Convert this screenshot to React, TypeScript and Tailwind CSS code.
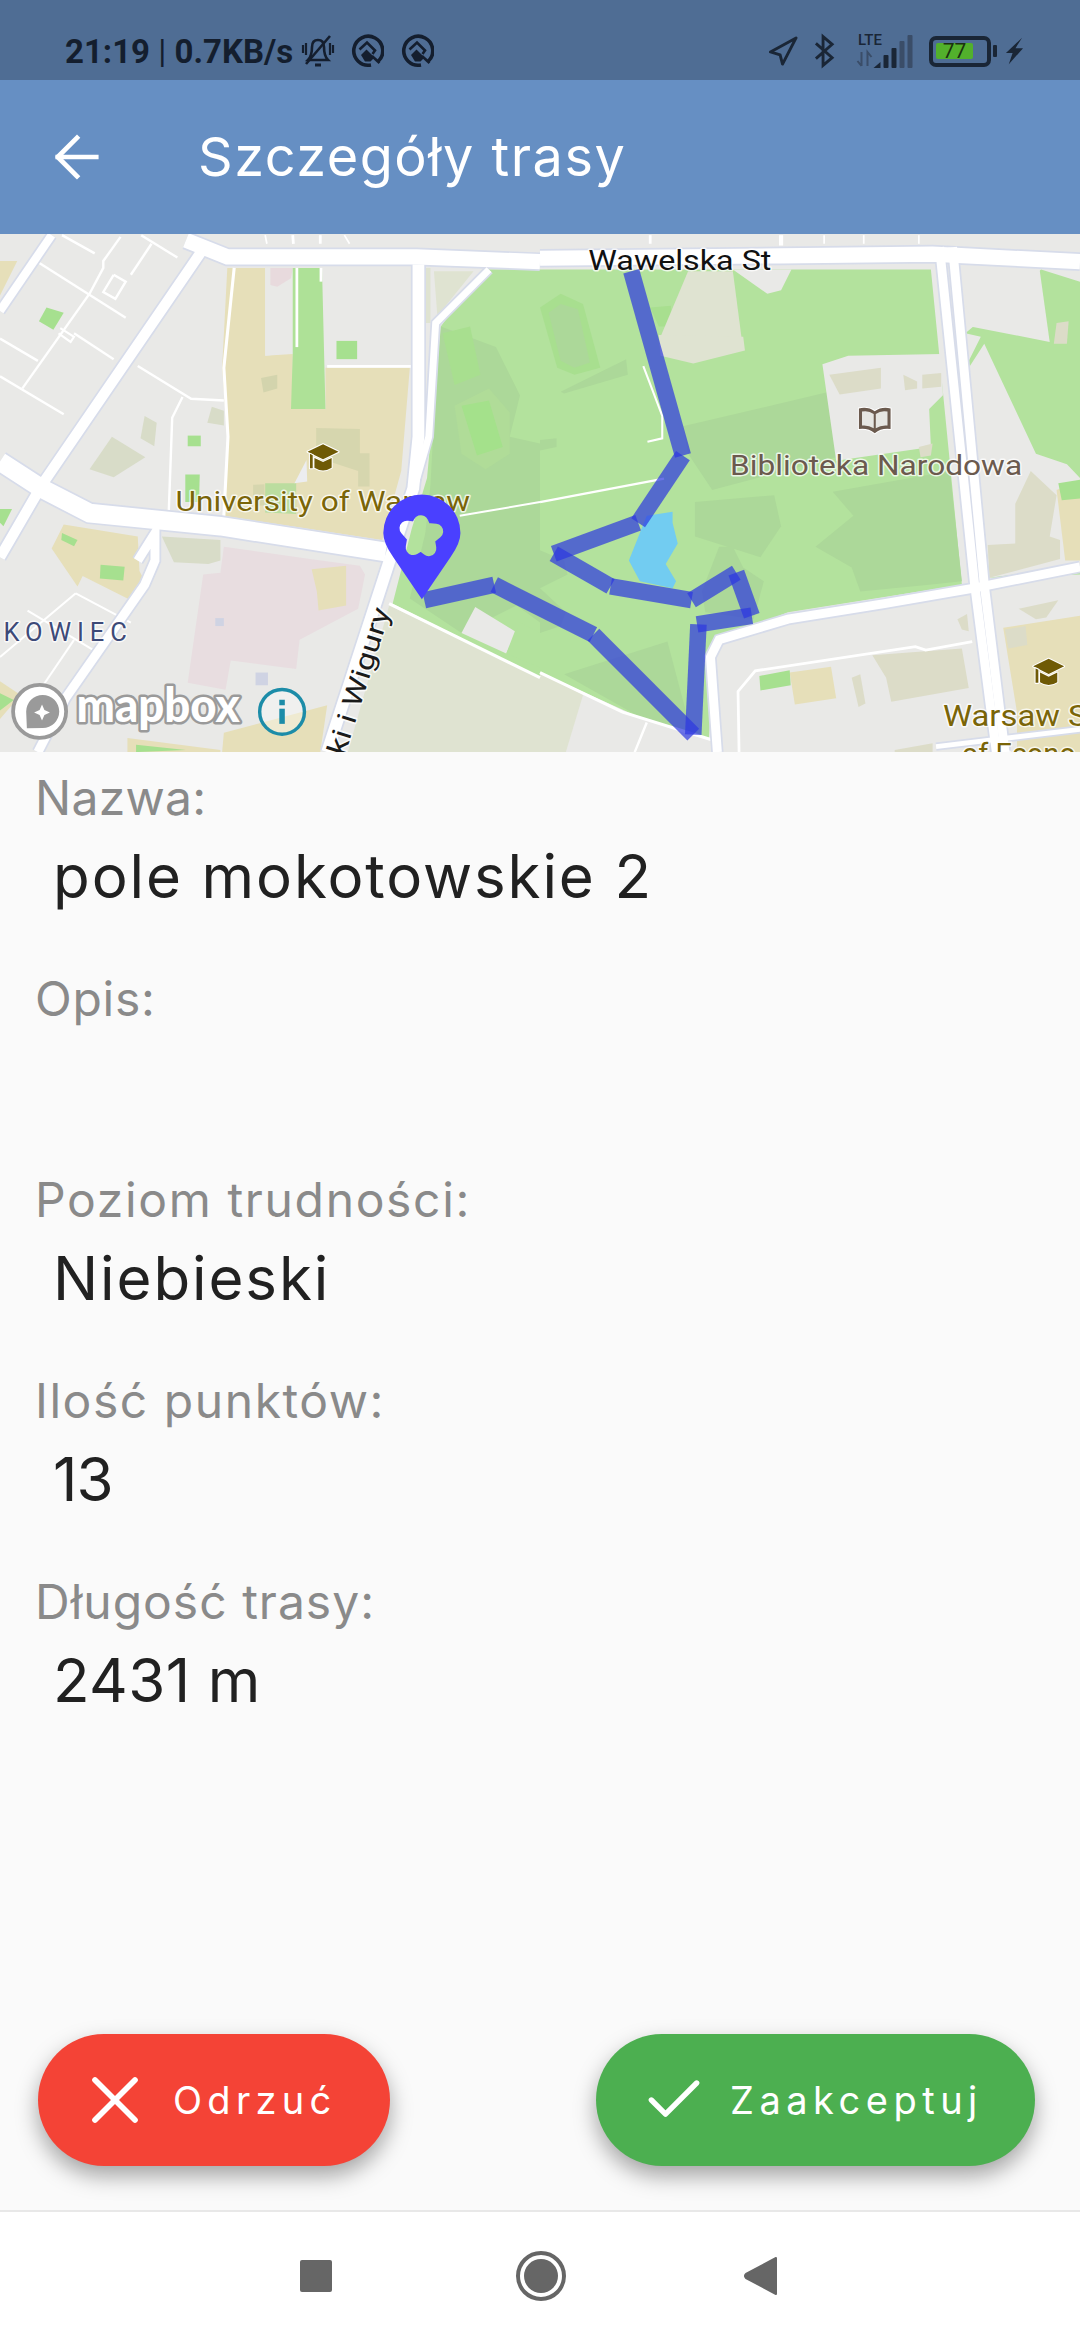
import { ArrowLeft, X, Check } from "lucide-react";

type P = [string, string];
const R = 1568;
const PARK = "#b3e29d";
const WOOD = "#acd899";
// polygons [points, fill], authored in 2.904x map units
const leftPolys: P[] = [
  ["660,110 770,110 770,365 850,360 850,520 945,520 945,400 1190,400 1165,700 1110,900 650,830 660,600 645,400", "#e6dfb9"],
  ["770,110 860,110 860,355 770,365", "#e9e9e7"],
  ["785,110 850,110 845,140 805,165 785,160", "#e8dadd"],
  ["850,110 935,110 945,520 845,520 850,360", "#aee197"],
  ["977,322 1037,322 1037,375 977,375", "#a6e08f"],
  ["758,430 805,420 805,460 765,472", "#d3d4ad"],
  ["918,575 1045,578 1045,648 1073,648 1073,745 1040,745 1040,700 918,660", "#d6d6ae"],
  ["770,735 860,735 860,825 770,820", "#bbdd9f"],
  ["735,740 768,738 768,800 735,800", "#d6d6ae"],
  ["855,735 890,668 892,730", "#ecedf0"],
  ["420,540 455,560 448,628 408,605", "#d8dcc8"],
  ["325,600 422,660 330,718 260,695", "#d8dcc8"],
  ["615,513 650,525 650,568 602,560", "#d8dcc8"],
  ["545,597 583,597 583,628 545,628", "#a6e08f"],
  ["538,710 580,710 578,790 538,790", "#a6e08f"],
  ["113,265 135,225 185,240 155,290", "#a6e08f"],
  ["150,925 185,855 400,890 405,990 420,1020 380,1075 240,1005 225,1035", "#e6dfb9"],
  ["180,880 225,900 215,918 178,900", "#a6e08f"],
  ["292,972 362,978 358,1018 290,1012", "#a6e08f"],
  ["0,810 35,810 10,860 0,850", "#a6e08f"],
  ["0,90 50,90 0,190", "#e6dfb9"],
  ["590,1000 640,995 650,920 900,955 1045,975 1060,1000 1040,1100 870,1190 860,1275 670,1250 655,1335 545,1315", "#e8dde0"],
  ["905,985 1005,975 1005,1090 925,1105 920,1050", "#e6dfb9"],
  ["625,1127 650,1127 650,1150 625,1150", "#cfd3e3"],
  ["742,1285 778,1285 778,1322 742,1322", "#cfd3e3"],
  ["470,890 640,900 640,960 605,970 505,965", "#d8dcc8"],
  ["1130,1090 1568,1300 1568,1516 1010,1516", "#dfe3d1"],
  ["650,1460 950,1380 930,1516 645,1516", "#e6dfb9"],
  ["370,1475 640,1510 640,1516 370,1516", "#e6dfb9"],
  ["395,1495 540,1510 395,1516", "#a6e08f"],
  ["0,1310 60,1350 0,1420", "#e6dfb9"],
  ["0,1345 40,1365 0,1395", "#a6e08f"],
  ["1400,115 1568,115 1568,1300 1140,1085 1195,870 1240,720 1280,280", PARK],
  ["1280,280 1440,340 1510,480 1480,600 1568,620 1568,1140 1500,1090 1340,1170 1190,1070 1235,880 1250,740 1260,550", WOOD],
  ["1285,300 1365,280 1395,420 1320,450", "#a8df8f"],
  ["1320,510 1420,460 1480,530 1480,650 1410,695 1340,650", "#b0dc98"],
  ["1340,510 1420,495 1460,630 1385,655", "#a4e18b"],
  ["1340,1170 1380,1095 1495,1165 1470,1230", "#e9e9e7"],
  ["1470,1230 1510,1140 1568,1170 1568,1270", PARK],
  ["1230,110 1250,110 1250,270 1230,270", "#dfe3d1"],
  ["1260,120 1375,120 1270,250", "#dfe3d1"],
];
const rightPolys: P[] = [
  ["0,1285 125,1350 75,1516 0,1516", "#dfe3d1"],
  ["0,115 1135,115 1225,1030 720,1110 510,1190 490,1480 300,1420 0,1285", PARK],
  ["415,570 840,470 860,660 500,755 430,650", WOOD],
  ["450,790 680,770 700,860 640,950 450,890", WOOD],
  ["850,760 1190,700 1225,1020 1130,1030 930,1050 905,980 800,920 910,830", WOOD],
  ["520,920 560,920 590,980 650,1020 620,1130 480,1110 470,1050", WOOD],
  ["0,1040 75,1110 60,1150 0,1170", WOOD],
  ["70,1290 370,1195 440,1460 300,1420", WOOD],
  ["0,225 60,185 125,215 175,400 100,420 50,400", "#a8df8f"],
  ["25,240 60,215 110,230 145,385 100,400 60,380", WOOD],
  ["60,470 250,375 255,420 70,475", WOOD],
  ["0,610 48,605 48,630 0,640", WOOD],
  ["320,225 380,220 385,280 345,280", "#a8df8f"],
  ["0,930 70,960 80,1000 0,1040", WOOD],
  ["430,120 560,120 590,350 350,310", "#dfe3d1"],
  ["345,305 590,310 595,350 445,388 350,365", "#dfe3d1"],
  ["560,115 730,115 700,175 660,185", "#e9e9e7"],
  ["820,390 895,365 1165,360 1170,480 1130,520 1135,630 860,670", "#e9e9e7"],
  ["840,420 990,400 990,460 870,478", "#dcdcc8"],
  ["1055,420 1095,440 1095,460 1060,465", "#dcdcc8"],
  ["1110,420 1165,415 1165,455 1110,460", "#dcdcc8"],
  ["1100,630 1140,620 1135,655 1105,660", "#dcdcc8"],
  ["1455,115 1568,150 1568,1000 1300,1010 1240,390 1280,310 1235,300", PARK],
  ["1250,280 1480,325 1450,110 1220,110", "#e9e9e7"],
  ["1245,400 1290,330 1440,650 1530,680 1568,720 1568,975 1305,1010", "#e9e9e7"],
  ["1425,700 1500,770 1480,890 1510,900 1510,955 1305,1010 1300,915 1380,910 1380,795", "#dcdcc8"],
  ["1500,755 1568,725 1568,960 1525,960", "#e6dfb9"],
  ["1505,735 1568,725 1568,780 1515,785", "#a6e08f"],
  ["1500,270 1535,265 1530,330 1492,330", "#dcdcc8"],
  ["1345,1155 1568,1120 1568,1516 1385,1516 1385,1400", "#e6dfb9"],
  ["1350,1160 1410,1150 1415,1205 1360,1215", "#dcdcc8"],
  ["1390,1100 1505,1075 1470,1125 1440,1130", "#dcdcc8"],
  ["965,1235 1225,1215 1245,1330 1020,1370 1005,1300", "#dcdcc8"],
  ["905,1300 930,1290 945,1375 925,1385", "#dcdcc8"],
  ["725,1285 845,1268 860,1360 740,1378", "#e6dfb9"],
  ["637,1295 725,1278 728,1322 640,1337", "#a6e08f"],
  ["1212,1130 1240,1115 1245,1165 1225,1160", "#dcdcc8"],
  ["1030,1510 1140,1490 1140,1516 1030,1516", "#dcdcc8"],
];
type Road = [string, number];
const leftRoads: Road[] = [
  ["590,55 125,735 0,950", 30],
  ["150,15 0,235", 24],
  ["400,960 450,880 450,960 420,1030 190,1360 110,1516", 26],
  ["0,672 120,750 260,822 640,860 1120,935", 54],
  ["950,1516 1128,970 1200,750 1215,600 1215,100", 34],
  ["1420,115 1265,270 1245,600 1205,740", 20],
  ["540,30 660,78 1210,78 1568,92", 44],
];
const rightRoads: Road[] = [
  ["0,82 700,75 1140,70 1568,92", 44],
  ["1160,50 1262,1030 1325,1516", 26],
  ["1198,50 1290,1030 1350,1516", 26],
  ["1568,978 1260,1040 1000,1085 720,1130 520,1190 495,1240 515,1516", 26],
  ["1150,1500 1568,1450", 14],
];
const leftLanes: [string, number][] = [
  ["105,90 365,255", 7], ["180,15 275,68", 7], ["440,40 380,130", 7], ["410,15 515,80", 7],
  ["350,20 300,90 300,110 260,185 65,460", 7], ["330,130 365,150 335,200 300,180 330,130", 7],
  ["175,285 215,310 205,325 170,300", 6], ["215,300 330,375", 7], ["0,315 110,380", 7],
  ["0,425 185,535", 7], ["400,395 555,490 650,495", 7], ["530,485 500,545 490,820", 7],
  ["680,110 650,400 662,600 650,830", 9], ["862,110 862,340", 8], ["950,396 1195,396", 8],
  ["220,1055 380,1140", 6], ["80,1105 280,1225", 6], ["0,1240 220,1055", 6], ["215,1190 120,1330", 6],
  ["1130,1085 1568,1300", 9], ["1335,830 1568,790", 6], ["770,15 775,40", 5], ["850,15 852,40", 8], ["930,15 930,40", 8], ["1000,15 1015,40", 5],
  ["932,110 932,150", 8],
];
const rightLanes: [string, number][] = [
  ["0,790 360,722", 7], ["300,395 355,540 355,605 312,615", 6], ["0,1285 240,1400 498,1480", 9],
  ["310,1430 275,1516", 7], ["578,1516 575,1340 625,1280 1090,1210 1120,1220 1255,1195", 8],
  ["825,15 825,40", 5], ["940,15 940,40", 5], ["320,15 320,40", 8], ["700,15 700,45", 12], ["1100,15 1100,40", 5],
];
const route = [
  "1833,120 1983,655", "1983,655 1853,850", "1853,850 1608,940", "1608,940 1773,1035", "1773,1035 2008,1075",
  "2008,1075 2138,995", "2138,995 2183,1120", "2183,1120 2024,1145", "2028,1145 2013,1465", "2013,1465 1723,1175",
  "1723,1175 1435,1030", "1435,1030 1232,1075",
];
const halo = { paintOrder: "stroke" as const };

function Cap({ x, y }: { x: number; y: number }) {
  return (
    <g transform={`translate(${x},${y})`} fill="#6f5a05" stroke="#fff" strokeWidth="6" style={halo} strokeLinejoin="round">
      <polygon points="-45,-18 0,-40 45,-18 0,4" />
      <path d="M-25,0 L0,12 L25,0 L25,28 Q0,44 -25,28 Z" />
      <path d="M-38,-12 L-38,30 L-30,30 L-30,-8 Z" />
    </g>
  );
}

function MapView() {
  return (
    <svg viewBox="0 234 1080 518" className="block w-full h-[518px]" preserveAspectRatio="none">
      <defs>
        <mask id="starmask" maskUnits="userSpaceOnUse" x="1000" y="700" width="450" height="450">
          <rect x="1000" y="700" width="450" height="450" fill="#fff" />
          <polygon
            points="1222,850 1232,872 1265,875 1240,895 1245,925 1223,908 1200,922 1205,892 1182,866 1212,870"
            fill="#000"
            stroke="#000"
            strokeWidth="44"
            strokeLinejoin="round"
          />
        </mask>
      </defs>
      <rect x="0" y="234" width="1080" height="518" fill="#e9e9e7" />
      <g transform="translate(0,230) scale(0.34439)">
        {leftPolys.map(([p, f], i) => <polygon key={i} points={p} fill={f} />)}
        <g transform={`translate(${R},0)`}>
          {rightPolys.map(([p, f], i) => <polygon key={i} points={p} fill={f} />)}
          <polygon points="310,830 385,818 385,850 400,910 365,970 395,1020 385,1040 290,1020 258,960" fill="#72ccf1" />
        </g>
        {leftLanes.map(([p, w], i) => <polyline key={i} points={p} fill="none" stroke="#fff" strokeWidth={w} />)}
        <g transform={`translate(${R},0)`}>
          {rightLanes.map(([p, w], i) => <polyline key={i} points={p} fill="none" stroke="#fff" strokeWidth={w} />)}
        </g>
        {leftRoads.map(([p, w], i) => <polyline key={i} points={p} fill="none" stroke="#d7dcea" strokeWidth={w + 10} />)}
        <g transform={`translate(${R},0)`}>
          {rightRoads.map(([p, w], i) => <polyline key={i} points={p} fill="none" stroke="#d7dcea" strokeWidth={w + 10} />)}
        </g>
        {leftRoads.map(([p, w], i) => <polyline key={i} points={p} fill="none" stroke="#fff" strokeWidth={w} />)}
        <g transform={`translate(${R},0)`}>
          {rightRoads.map(([p, w], i) => <polyline key={i} points={p} fill="none" stroke="#fff" strokeWidth={w} />)}
        </g>
        <g fontFamily="Roboto, sans-serif" style={halo} stroke="#ffffff" strokeWidth="8" strokeOpacity="0.75" strokeLinejoin="round">
          <text x="510" y="815" fontSize="80" fill="#7a6508" textLength="855" lengthAdjust="spacingAndGlyphs">University of Warsaw</text>
          <text x="10" y="1193" fontSize="74" fill="#3d4a78" textLength="358">KOWIEC</text>
          <text transform="translate(1000,1530) rotate(-72.5)" fontSize="78" fill="#1a1a1a" textLength="445" lengthAdjust="spacingAndGlyphs">ki i Wigury</text>
          <text x="1708" y="115" fontSize="82" fill="#111" textLength="532" lengthAdjust="spacingAndGlyphs">Wawelska St</text>
          <text x="2120" y="712" fontSize="82" fill="#6b5a4e" textLength="848" lengthAdjust="spacingAndGlyphs">Biblioteka Narodowa</text>
          <text x="2738" y="1440" fontSize="84" fill="#7a6508" textLength="420" lengthAdjust="spacingAndGlyphs">Warsaw S</text>
          <text x="2793" y="1552" fontSize="84" fill="#7a6508">of Econo</text>
        </g>
        <Cap x={938} y={662} />
        <Cap x={3045} y={1285} />
        <g transform="translate(2540,552)" stroke="#fff" strokeWidth="6" style={halo} strokeLinejoin="round">
          <path d="M-46,-34 Q-20,-40 0,-26 Q20,-40 46,-34 L46,26 Q20,22 0,38 Q-20,22 -46,26 Z" fill="#6b5a4e" />
          <path d="M-37,-25 Q-18,-29 -3,-18 L-3,24 Q-18,14 -37,16 Z M37,-25 Q18,-29 3,-18 L3,24 Q18,14 37,16 Z" fill="#e6e6e2" stroke="none" />
        </g>
        {route.map((p, i) => (
          <polyline key={i} points={p} fill="none" stroke="#2c38e0" strokeOpacity="0.7" strokeWidth="48" />
        ))}
        <path
          d="M1225,1072 L1142,950 Q1113,910 1113,880 A112,112 0 0 1 1337,880 Q1337,910 1308,950 Z"
          fill="#4a40ff"
          mask="url(#starmask)"
        />
        <circle cx="115" cy="1398" r="77" fill="#fff" stroke="#9a9a9a" strokeWidth="11" />
        <path d="M78,1447 L76,1398 A48,48 0 1 1 124,1446 Z" fill="#9a9a9a" />
        <path d="M122,1378 L129,1394 L145,1401 L129,1408 L122,1424 L115,1408 L99,1401 L115,1394 Z" fill="#fff" />
        <text x="222" y="1428" fontFamily="Lato, sans-serif" fontWeight="900" fontSize="138" fill="#fff" stroke="#9a9a9a" strokeWidth="15" style={halo} textLength="474" lengthAdjust="spacingAndGlyphs" strokeLinejoin="round">mapbox</text>
        <circle cx="819" cy="1399" r="65" fill="#fff" fillOpacity="0.35" stroke="#1c8ca8" strokeWidth="10" />
        <rect x="811" y="1390" width="16" height="44" fill="#1c8ca8" />
        <rect x="811" y="1364" width="16" height="16" fill="#1c8ca8" />
      </g>
    </svg>
  );
}

function StatusBar() {
  return (
    <div className="flex h-20 items-center justify-between bg-[#4f6d94] pl-[65px] pr-[56px] pt-[22px] text-[#141e2e]">
      <div className="flex items-center">
        <span className="font-['Roboto',sans-serif] text-[33px] font-bold leading-none whitespace-nowrap">
          21:19 <span className="font-normal">|</span> 0.7KB/s
        </span>
        <svg width="34" height="34" viewBox="0 0 34 34" className="ml-[8px]" fill="none" stroke="#141e2e" strokeWidth="2.6">
          <path d="M7 26 Q11 22 11 13 Q11 6 17 6 Q23 6 23 13 Q23 22 27 26 Z" />
          <path d="M14 31 H20" strokeWidth="3" />
          <path d="M5 30 L29 2" />
          <path d="M2 11 V19 M5 9 V21 M29 9 V21 M32 11 V19" strokeWidth="2.2" />
        </svg>
        {[0, 1].map((i) => (
          <svg key={i} width="33" height="34" viewBox="0 0 33 34" className={i === 0 ? "ml-[16px]" : "ml-[17px]"} fill="none" stroke="#141e2e">
            <path d="M27 27.5 A14.5 14.5 0 1 0 20 31" strokeWidth="3.6" />
            <path d="M8.5 15.5 L16 8.5 L24 16.5 L21.5 20" strokeWidth="2.6" />
            <path d="M10 21 L15.5 15.5 L23.5 23.5 L19.5 27.5 L14 27.5 Z" fill="#141e2e" stroke="none" />
            <path d="M21 22 L28.5 29" strokeWidth="2.6" />
          </svg>
        ))}
      </div>
      <div className="flex items-center text-[#141e2e]">
        <svg width="29" height="32" viewBox="0 0 30 32" fill="none" stroke="#1a2636" strokeWidth="3" strokeLinejoin="round">
          <path d="M1.5 17 L28 2.5 L14 29.5 L11.5 20 Z" />
        </svg>
        <svg width="21" height="36" viewBox="0 0 22 36" className="ml-[16px]" fill="none" stroke="#1a2636" strokeWidth="3">
          <path d="M2 10 L19 25 L9.5 33 V3 L19 11 L2 26" />
        </svg>
        <div className="relative ml-[21px] h-[34px] w-[57px]">
          <span className="absolute left-[2px] top-[-3px] font-['Roboto',sans-serif] text-[15px] font-medium leading-[18px] text-[#1a2636]">LTE</span>
          <svg width="57" height="34" viewBox="0 0 56 34" className="absolute inset-0">
            <path d="M5 18 V32 M1 27 L5 32 M11 32 V18 L15 23" stroke="#3a4d68" strokeWidth="2" fill="none" />
            <polygon points="17,34 24,28 24,34" fill="#1a2636" />
            <rect x="27" y="21" width="5" height="13" rx="1" fill="#1a2636" />
            <rect x="35" y="14" width="5" height="20" rx="1" fill="#1a2636" />
            <rect x="43" y="7" width="5" height="27" rx="1" fill="#3a4d68" />
            <rect x="51" y="1" width="5" height="33" rx="1" fill="#3a4d68" />
          </svg>
        </div>
        <div className="relative ml-[16px] flex h-[31px] w-[62px] items-center rounded-[7px] border-[4px] border-[#1a2636] pl-[3px]">
          <div className="flex h-[16px] w-[37px] items-center justify-center rounded-[2px] bg-[#52b02c]">
            <span className="font-['Roboto',sans-serif] text-[21px] leading-none text-[#1a3010]">77</span>
          </div>
        </div>
        <div className="ml-[2px] h-[12px] w-[4px] rounded-[1px] bg-[#1a2636]" />
        <svg width="19" height="30" viewBox="0 0 20 30" className="ml-[8px]" fill="#1a2636">
          <path d="M18 1 L1 17 H8 L4 29 L19 12 H11 Z" />
        </svg>
      </div>
    </div>
  );
}

const fields = [
  { label: "Nazwa:", value: "pole mokotowskie 2", lt: "tracking-[0.3px]", vt: "tracking-[1.9px]" },
  { label: "Opis:", value: "", lt: "tracking-[0.75px]", vt: "tracking-[1.9px]" },
  { label: "Poziom trudności:", value: "Niebieski", lt: "tracking-[1.65px]", vt: "tracking-[1.9px]" },
  { label: "Ilość punktów:", value: "13", lt: "tracking-[1.55px]", vt: "tracking-[-1px]" },
  { label: "Długość trasy:", value: "2431 m", lt: "tracking-[1px]", vt: "tracking-[0.4px]" },
];

export default function App() {
  return (
    <div className="flex h-[2340px] w-[1080px] flex-col overflow-hidden bg-[#fafafa] font-['Inter',sans-serif]">
      <StatusBar />
      <header className="flex h-[154px] items-center bg-[#668fc3] pl-[44px] text-white">
        <ArrowLeft size={66} strokeWidth={1.7} strokeLinecap="square" />
        <h1 className="ml-[88px] text-[54px] font-normal leading-none tracking-[1.5px]">Szczegóły trasy</h1>
      </header>
      <MapView />
      <main className="flex-1 pt-[18px]">
        {fields.map((f) => (
          <div key={f.label} className="h-[201px] pl-[35px]">
            <div className={`h-[56px] text-[48px] leading-[56px] text-[#8a8a8a] ${f.lt}`}>{f.label}</div>
            <div className={`mt-[8px] h-[84px] pl-[18px] text-[60px] leading-[84px] text-[#212121] ${f.vt}`}>{f.value}</div>
          </div>
        ))}
      </main>
      <div className="flex items-center justify-between pb-[44px] pl-[38px] pr-[45px]">
        <button className="flex h-[132px] w-[352px] items-center rounded-full bg-[#f44336] pl-[37px] text-white shadow-[0_10px_22px_rgba(0,0,0,0.35)]">
          <X size={80} strokeWidth={1.7} />
          <span className="ml-[18px] text-[38px] tracking-[5.3px]">Odrzuć</span>
        </button>
        <button className="flex h-[132px] w-[439px] items-center rounded-full bg-[#4caf50] pl-[44px] text-white shadow-[0_10px_22px_rgba(0,0,0,0.35)]">
          <Check size={68} strokeWidth={1.9} />
          <span className="ml-[22px] text-[38px] tracking-[5.5px]">Zaakceptuj</span>
        </button>
      </div>
      <nav className="relative flex h-[130px] items-center border-t-2 border-[#e8e8e8] bg-white pl-[300px]">
        <div className="h-[32px] w-[32px] rounded-[2px] bg-[#666666]" />
        <div className="ml-[184px] flex h-[50px] w-[50px] items-center justify-center rounded-full border-[4px] border-[#666666]">
          <div className="h-[34px] w-[34px] rounded-full bg-[#666666]" />
        </div>
        <svg width="34" height="40" viewBox="0 0 34 40" className="ml-[178px]" fill="#666666">
          <path d="M32 2 L32 38 L2 22 Q0 20 2 18 Z" stroke="#666666" strokeWidth="2" strokeLinejoin="round" />
        </svg>
      </nav>
    </div>
  );
}
